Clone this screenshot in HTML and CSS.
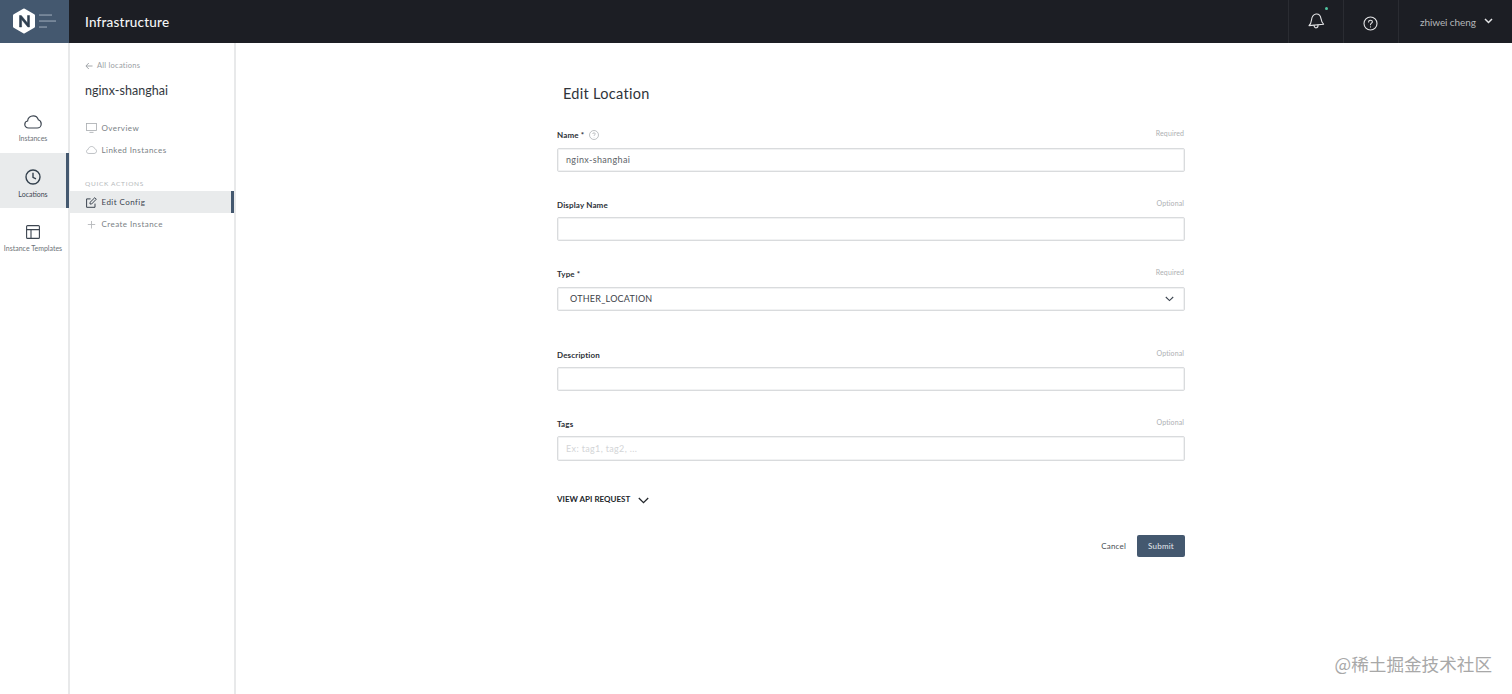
FILE: index.html
```html
<!DOCTYPE html>
<html lang="en">
<head>
<meta charset="utf-8">
<title>Edit Location</title>
<link rel="stylesheet" href="styles.css">
</head>
<body>
<div class="app">
  <header class="topbar">
    <div class="brand">
      <svg class="logo" width="44" height="31" viewBox="0 0 44 31">
        <path d="M11 4 L20.5 9.5 V20.5 L11 26 L1.5 20.5 V9.5 Z" fill="#fff" stroke="#fff" stroke-width="3" stroke-linejoin="round"/>
        <path d="M6.5 21 V9.5 H8.3 L14.5 17 V9.5 H16.5 V21 H14.8 L8.6 13.4 V21 Z" fill="#2f3f50" stroke="#2f3f50" stroke-width=".5"/>
        <rect x="26" y="8.4" width="13" height="1.3" fill="#8c9bab"/>
        <rect x="26" y="14.4" width="17" height="1.3" fill="#8c9bab"/>
        <rect x="26" y="20.4" width="8" height="1.3" fill="#8c9bab"/>
      </svg>
    </div>
    <div class="app-title">Infrastructure</div>
    <div class="top-actions">
      <div class="top-cell bell-cell">
        <svg width="18" height="18" viewBox="0 0 18 18" fill="none" stroke="#e4e5e7" stroke-width="1.1" stroke-linejoin="round" stroke-linecap="round">
          <path d="M2 13.6 C4 12 4.2 10.5 4.5 8 C4.9 4.4 6.5 2.4 9 2 C11.6 1.7 13.4 3.4 14 6.6 C14.5 9.3 15 11 16.6 12.2 Z"/>
          <path d="M7 13.4 C7.2 15.2 8.3 16 9.4 15.8 C10.5 15.6 11.2 14.6 11 13"/>
        </svg>
        <span class="dot"></span>
      </div>
      <div class="top-cell help-cell">
        <svg width="15" height="15" viewBox="0 0 15 15" fill="none" stroke="#e4e5e7" stroke-width="1.1" stroke-linecap="round">
          <circle cx="7.5" cy="7.5" r="6.5"/>
          <path d="M5.6 6 C5.6 4.8 6.5 4.2 7.5 4.2 C8.6 4.2 9.4 4.9 9.4 5.8 C9.4 7.2 7.5 7.2 7.5 8.8"/>
          <path d="M7.5 10.7 V10.9"/>
        </svg>
      </div>
      <div class="user">
        <span>zhiwei cheng</span>
        <svg width="9" height="6" viewBox="0 0 9 6" fill="none" stroke="#e4e5e7" stroke-width="1.5"><path d="M1 1 L4.5 4.5 L8 1"/></svg>
      </div>
    </div>
  </header>

  <div class="body">
    <nav class="rail">
      <a class="rail-item">
        <svg width="18" height="14" viewBox="0 0 18 14" fill="none" stroke="#3c4550" stroke-width="1.2"><path d="M4.6 13 C2.2 13 .8 11.3 .8 9.4 C.8 7.5 2.2 6.2 3.6 6 C3.9 3 6.3 .8 9.2 .8 C11.8 .8 13.6 2.4 14.3 4.7 C16 5.3 17.2 6.9 17.2 8.9 C17.2 11.2 15.4 13 13.2 13 Z"/></svg>
        <span>Instances</span>
      </a>
      <a class="rail-item active">
        <svg width="16" height="16" viewBox="0 0 16 16" fill="none" stroke="#33404d" stroke-width="1.4"><circle cx="8" cy="8" r="7"/><path d="M8 3.8 V8.4 L11 9.8"/></svg>
        <span>Locations</span>
      </a>
      <a class="rail-item">
        <svg width="14" height="14" viewBox="0 0 14 14" fill="none" stroke="#3c4550" stroke-width="1.1"><rect x=".6" y=".6" width="12.8" height="12.8" rx="1"/><path d="M.6 4.6 H13.4 M5 4.6 V13.4"/></svg>
        <span>Instance Templates</span>
      </a>
    </nav>

    <aside class="subnav">
      <a class="back">
        <svg width="8" height="8" viewBox="0 0 8 8" fill="none" stroke="#9a9ea3" stroke-width=".9"><path d="M7.5 4 H1 M3.8 1 L.9 4 L3.8 7"/></svg>
        <span>All locations</span>
      </a>
      <h2 class="entity">nginx-shanghai</h2>
      <ul class="links">
        <li class="link">
          <svg width="11" height="10" viewBox="0 0 11 10" fill="none" stroke="#a7abaf" stroke-width=".8"><rect x=".5" y=".5" width="10" height="7"/><path d="M3.5 9.4 H7.5"/></svg>
          <span>Overview</span>
        </li>
        <li class="link">
          <svg width="11" height="8" viewBox="0 0 18 13" fill="none" stroke="#a7abaf" stroke-width="1.2"><path d="M4.6 12.2 C2.2 12.2 .8 10.6 .8 8.8 C.8 7 2.2 5.8 3.6 5.6 C3.9 2.9 6.3 .8 9.2 .8 C11.8 .8 13.6 2.3 14.3 4.4 C16 5 17.2 6.5 17.2 8.4 C17.2 10.6 15.4 12.2 13.2 12.2 Z"/></svg>
          <span>Linked Instances</span>
        </li>
      </ul>
      <div class="section-label">QUICK ACTIONS</div>
      <ul class="actions">
        <li class="link current">
          <svg width="11" height="11" viewBox="0 0 11 11" fill="none" stroke="#3c4550" stroke-width="1"><path d="M9 6.6 V10.3 H.6 V1.9 H4.6"/><path d="M4 5.4 L8.8 .7 L10.3 2.2 L5.6 7 H4 Z"/></svg>
          <span>Edit Config</span>
        </li>
        <li class="link">
          <svg width="11" height="11" viewBox="0 0 11 11" fill="none" stroke="#b5b8bb" stroke-width=".9"><path d="M5.5 2 V9.5 M1.8 5.5 H9.2"/></svg>
          <span>Create Instance</span>
        </li>
      </ul>
    </aside>

    <main class="main">
      <form class="form">
        <h1 class="title">Edit Location</h1>

        <div class="field field-name">
          <div class="label-row">
            <label class="label">Name *
              <svg class="hint" width="10" height="10" viewBox="0 0 10 10" fill="none" stroke="#a3a7ab" stroke-width=".7"><circle cx="5" cy="5" r="4.5"/><path d="M3.7 4 C3.7 3.2 4.3 2.8 5 2.8 C5.7 2.8 6.3 3.3 6.3 3.9 C6.3 4.8 5 4.8 5 5.9 M5 7 V7.3"/></svg>
            </label>
            <span class="note">Required</span>
          </div>
          <div class="input">nginx-shanghai</div>
        </div>

        <div class="field">
          <div class="label-row"><label class="label">Display Name</label><span class="note">Optional</span></div>
          <div class="input"></div>
        </div>

        <div class="field field-type">
          <div class="label-row"><label class="label">Type *</label><span class="note">Required</span></div>
          <div class="input select">
            <span>OTHER_LOCATION</span>
            <svg width="9" height="6" viewBox="0 0 9 6" fill="none" stroke="#3c4550" stroke-width="1.1"><path d="M.8 1 L4.5 4.6 L8.2 1"/></svg>
          </div>
        </div>

        <div class="field field-desc">
          <div class="label-row"><label class="label">Description</label><span class="note">Optional</span></div>
          <div class="input"></div>
        </div>

        <div class="field">
          <div class="label-row"><label class="label">Tags</label><span class="note">Optional</span></div>
          <div class="input placeholder tall">Ex: tag1, tag2, ...</div>
        </div>

        <div class="api">
          <span>VIEW API REQUEST</span>
          <svg width="11" height="7" viewBox="0 0 11 7" fill="none" stroke="#22262b" stroke-width="1.3"><path d="M.8 1 L5.5 5.6 L10.2 1"/></svg>
        </div>

        <div class="buttons">
          <span class="cancel">Cancel</span>
          <span class="submit">Submit</span>
        </div>
      </form>
    </main>
  </div>
  <div class="watermark">@稀土掘金技术社区</div>
</div>
</body>
</html>
```

FILE: styles.css
```css
* { box-sizing: border-box; }
html, body { margin: 0; height: 100%; }
body {
  font-family: "Lato", "Liberation Sans", sans-serif;
  color: #2b3036;
  background: #fff;
  overflow: hidden;
}
h1, h2, ul { margin: 0; padding: 0; list-style: none; font-weight: 400; }
.app { position: relative; width: 1512px; height: 694px; display: flex; flex-direction: column; }

.topbar { height: 43px; flex: none; background: #1c1e24; display: flex; align-items: center; }
.brand { width: 69px; height: 43px; background: #44586f; display: flex; align-items: center; padding-left: 13px; }
.logo { display: block; }
.app-title { margin-left: 16px; color: #f4f5f6; font-size: 13.5px; letter-spacing: .2px; font-weight: 500; }
.top-actions { margin-left: auto; display: flex; height: 43px; }
.top-cell { position: relative; display: flex; align-items: center; justify-content: center; border-left: 1px solid #2a2c32; height: 43px; }
.bell-cell { width: 55px; padding-bottom: 2px; }
.help-cell { width: 55px; padding-top: 3px; padding-right: 2px; }
.dot { position: absolute; left: 36px; top: 7px; width: 3px; height: 3px; border-radius: 50%; background: #4fc4a0; }
.user { width: 114px; border-left: 1px solid #2a2c32; display: flex; align-items: center; padding-left: 21px; gap: 8px; color: #b4b6b9; font-size: 10px; letter-spacing: -.1px; }
.user svg { margin-top: -1px; }

.body { flex: 1; display: flex; min-height: 0; }
.rail { width: 70px; flex: none; border-right: 2px solid #e8e9ea; padding-top: 55px; display: flex; flex-direction: column; }
.rail-item { height: 55px; display: flex; flex-direction: column; align-items: center; justify-content: center; gap: 5px; font-size: 7px; color: #6c7278; white-space: nowrap; padding: 6px 2px 0 0; }
.rail-item svg { flex: none; }
.rail-item.active { background: #e9ebec; border-right: 3px solid #44586f; margin-right: -1px; color: #3c4550; padding-right: 0; }

.subnav { width: 166px; flex: none; border-right: 2px solid #e8e9ea; padding-top: 18px; }
.back { display: flex; align-items: center; gap: 4px; padding-left: 15px; font-size: 7.5px; letter-spacing: .25px; color: #9a9ea3; height: 9px; }
.entity { font-size: 12.5px; letter-spacing: .05px; margin: 13px 0 0 15px; line-height: 16px; color: #33383e; }
.links { margin-top: 18px; }
.link { height: 22px; display: flex; align-items: center; gap: 4.5px; padding-left: 16px; font-size: 8px; letter-spacing: .45px; color: #7a7f85; }
.link svg { flex: none; }
.section-label { margin-top: 18px; padding-left: 15px; font-size: 6.5px; letter-spacing: .7px; color: #b4b8bb; line-height: 10px; }
.actions { margin-top: 2px; }
.current { background: #e9ebec; border-right: 3px solid #44586f; color: #3c4550; }

.main { flex: 1; min-width: 0; padding: 0 0 0 321px; }
.form { width: 628px; }
.title { font-size: 14.5px; letter-spacing: .3px; line-height: 20px; margin: 41px 0 0 6px; color: #2f343a; }
.field { margin-top: 27px; }
.field-name { margin-top: 25px; }
.field-desc { margin-top: 38px; }
.label-row { display: flex; justify-content: space-between; align-items: flex-start; height: 18px; }
.field-name .label-row, .field-type .label-row { height: 19px; }
.label { font-size: 8px; font-weight: 700; letter-spacing: .15px; color: #2b3036; display: flex; align-items: center; gap: 5px; line-height: 12px; }
.note { font-size: 7px; color: #adb0b3; line-height: 9px; letter-spacing: .1px; padding-right: 1px; }
.input { height: 24px; border: 1px solid #d9dbdd; box-shadow: inset 0 0 0 1px #f1f2f3; border-radius: 2px; padding: 0 0 1px 8px; display: flex; align-items: center; font-size: 9px; letter-spacing: .35px; color: #5d6268; background: #fff; }
.tall { height: 25px; }
.select { justify-content: space-between; padding: 0 10px 1px 12px; color: #3c4248; letter-spacing: .25px; }
.placeholder { color: #d3d5d7; }
.api { margin-top: 32px; display: flex; align-items: center; gap: 8px; font-size: 8px; font-weight: 700; color: #22262b; height: 12px; }
.api svg { margin-top: 2px; }
.buttons { margin-top: 30px; display: flex; justify-content: flex-end; align-items: center; gap: 11px; font-size: 8px; letter-spacing: .2px; }
.cancel { color: #4a4f55; }
.submit { width: 48px; height: 22px; background: #44586f; color: #e6eaee; border-radius: 2px; display: flex; align-items: center; justify-content: center; }

.watermark { position: absolute; right: 20px; top: 653px; font-family: "Noto Sans CJK SC", "Liberation Sans", sans-serif; font-size: 17.6px; line-height: 22px; color: #a8a8a8; }
```
